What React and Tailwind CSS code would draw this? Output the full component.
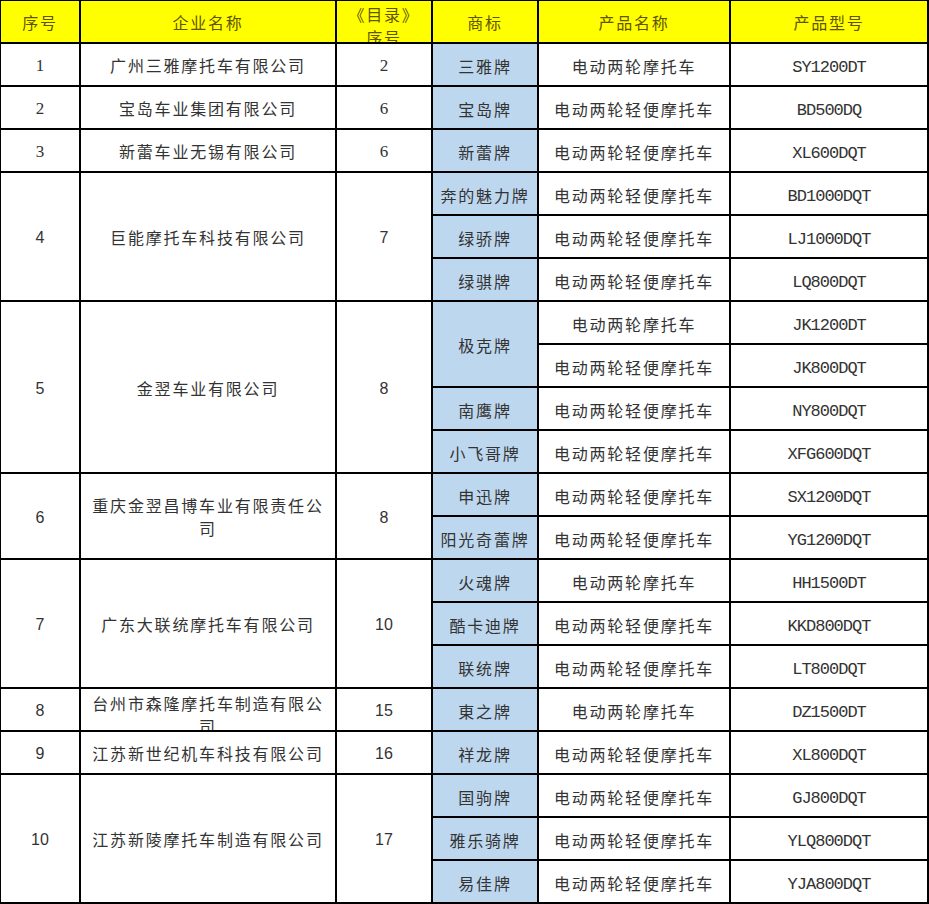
import React from "react"

const M = "电动两轮摩托车"
const L = "电动两轮轻便摩托车"

const groups = [
  { no: "1", company: ["广州三雅摩托车有限公司"], idx: "2", serif: true, items: [{ brand: "三雅牌", name: M, model: "SY1200DT" }] },
  { no: "2", company: ["宝岛车业集团有限公司"], idx: "6", serif: true, items: [{ brand: "宝岛牌", name: L, model: "BD500DQ" }] },
  { no: "3", company: ["新蕾车业无锡有限公司"], idx: "6", serif: true, items: [{ brand: "新蕾牌", name: L, model: "XL600DQT" }] },
  {
    no: "4",
    company: ["巨能摩托车科技有限公司"],
    idx: "7",
    items: [
      { brand: "奔的魅力牌", name: L, model: "BD1000DQT" },
      { brand: "绿骄牌", name: L, model: "LJ1000DQT" },
      { brand: "绿骐牌", name: L, model: "LQ800DQT" },
    ],
  },
  {
    no: "5",
    company: ["金翌车业有限公司"],
    idx: "8",
    items: [
      { brand: "极克牌", span: 2, name: M, model: "JK1200DT" },
      { brand: null, name: L, model: "JK800DQT" },
      { brand: "南鹰牌", name: L, model: "NY800DQT" },
      { brand: "小飞哥牌", name: L, model: "XFG600DQT" },
    ],
  },
  {
    no: "6",
    company: ["重庆金翌昌博车业有限责任公", "司"],
    idx: "8",
    items: [
      { brand: "申迅牌", name: L, model: "SX1200DQT" },
      { brand: "阳光奇蕾牌", name: L, model: "YG1200DQT" },
    ],
  },
  {
    no: "7",
    company: ["广东大联统摩托车有限公司"],
    idx: "10",
    items: [
      { brand: "火魂牌", name: M, model: "HH1500DT" },
      { brand: "酷卡迪牌", name: L, model: "KKD800DQT" },
      { brand: "联统牌", name: L, model: "LT800DQT" },
    ],
  },
  { no: "8", company: ["台州市森隆摩托车制造有限公", "司"], idx: "15", clip: true, items: [{ brand: "東之牌", name: M, model: "DZ1500DT" }] },
  { no: "9", company: ["江苏新世纪机车科技有限公司"], idx: "16", items: [{ brand: "祥龙牌", name: L, model: "XL800DQT" }] },
  {
    no: "10",
    company: ["江苏新陵摩托车制造有限公司"],
    idx: "17",
    items: [
      { brand: "国驹牌", name: L, model: "GJ800DQT" },
      { brand: "雅乐骑牌", name: L, model: "YLQ800DQT" },
      { brand: "易佳牌", name: L, model: "YJA800DQT" },
    ],
  },
]

const SPAN = { 1: "", 2: "row-span-2", 3: "row-span-3", 4: "row-span-4" }

const cjk = "font-['Noto_Sans_CJK_SC',sans-serif] text-[16px] tracking-[1.8px]"
const cell = "flex items-center justify-center text-center bg-white text-[#333]"

const Header = ({ children, clip }) => (
  <div
    className={`flex justify-center text-center bg-[#ffff00] text-[#5f5400] leading-[23px] ${cjk} ${
      clip ? "items-start pt-[2px] overflow-hidden" : "items-center pt-[2px]"
    }`}
  >
    {children}
  </div>
)

const App = () => {
  const cells = []
  groups.forEach((g) => {
    const span = SPAN[g.items.length]
    const num = g.serif
      ? "font-['Liberation_Serif',serif] text-[17px] pt-[3px]"
      : "font-['Liberation_Sans',sans-serif] text-[16px] pt-[3px]"
    g.items.forEach((it, i) => {
      if (i === 0) {
        cells.push(
          <div key={g.no + "a"} className={`${cell} ${span} ${num}`}>
            {g.no}
          </div>
        )
        cells.push(
          <div
            key={g.no + "b"}
            className={`flex flex-col text-center bg-white text-[#333] leading-[23px] ${span} ${cjk} ${
              g.clip ? "justify-start pt-[3px] overflow-hidden" : "justify-center pt-[2px]"
            }`}
          >
            {g.company.map((line) => (
              <span key={line}>{line}</span>
            ))}
          </div>
        )
        cells.push(
          <div key={g.no + "c"} className={`${cell} ${span} ${num}`}>
            {g.idx}
          </div>
        )
      }
      if (it.brand) {
        cells.push(
          <div
            key={g.no + i + "d"}
            className={`flex items-center justify-center text-center bg-[#bdd7ee] text-[#333] pt-[2px] ${cjk} ${
              it.span ? SPAN[it.span] : ""
            }`}
          >
            {it.brand}
          </div>
        )
      }
      cells.push(
        <div key={g.no + i + "e"} className={`${cell} pt-[2px] ${cjk}`}>
          {it.name}
        </div>
      )
      cells.push(
        <div
          key={g.no + i + "f"}
          className={`${cell} pt-[7px] font-['Liberation_Mono','Noto_Sans_CJK_SC',monospace] text-[17px] tracking-[-1px]`}
        >
          {it.model}
        </div>
      )
    })
  })

  return (
    <div className="w-[929px] h-[904px] bg-white">
      <div className="grid grid-cols-[78px_254px_94px_104px_190px_196px] grid-rows-[repeat(21,41px)] gap-[2px] bg-black pl-px pt-px pr-[2px] pb-[2px]">
        <Header>序号</Header>
        <Header>企业名称</Header>
        <Header clip>
          <div className="flex flex-col">
            <span>《目录》</span>
            <span>序号</span>
          </div>
        </Header>
        <Header>商标</Header>
        <Header>产品名称</Header>
        <Header>产品型号</Header>
        {cells}
      </div>
    </div>
  )
}

export default App
